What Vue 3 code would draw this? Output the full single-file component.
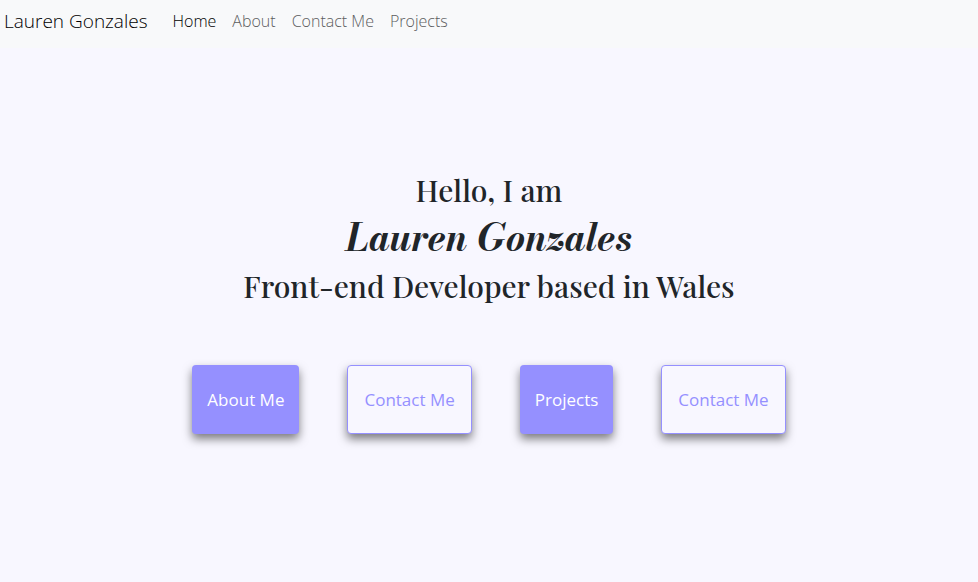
<script setup>
const links = [
  { label: 'Home', active: true },
  { label: 'About' },
  { label: 'Contact Me' },
  { label: 'Projects' },
]
const actions = [
  { label: 'About Me', kind: 'filled' },
  { label: 'Contact Me', kind: 'outline' },
  { label: 'Projects', kind: 'filled' },
  { label: 'Contact Me', kind: 'outline' },
]
</script>

<template>
  <div class="page">
    <nav class="navbar">
      <a class="brand" href="#">Lauren Gonzales</a>
      <ul class="links">
        <li v-for="link in links" :key="link.label">
          <a href="#" :class="{ active: link.active }">{{ link.label }}</a>
        </li>
      </ul>
    </nav>
    <main class="hero">
      <h2 class="line">Hello, I am</h2>
      <h1 class="name">Lauren Gonzales</h1>
      <h2 class="line">Front-end Developer based in Wales</h2>
      <div class="actions">
        <button v-for="(action, i) in actions" :key="i" type="button" :class="['btn', action.kind]">
          {{ action.label }}
        </button>
      </div>
    </main>
  </div>
</template>

<style>
body {
  margin: 0;
  background: #f8f7ff;
}
</style>

<style scoped>
.page {
  min-height: 100vh;
  background: #f8f7ff;
  color: #212529;
  font-family: "Segoe UI", "Open Sans", "Noto Sans", sans-serif;
}
.navbar {
  display: flex;
  align-items: center;
  gap: 17px;
  padding: 1px 4px 7px;
  background: #f8f9fa;
}
.brand {
  color: #000;
  font-size: 19px;
  font-weight: 300;
  line-height: 30px;
  text-decoration: none;
  white-space: nowrap;
}
.links {
  display: flex;
  margin: 0;
  padding: 0;
  list-style: none;
}
.links a {
  display: block;
  padding: 8px;
  color: #5c5d5e;
  font-size: 16px;
  font-weight: 300;
  line-height: 24px;
  text-decoration: none;
  white-space: nowrap;
}
.links a.active {
  color: #000;
}
.hero {
  display: flex;
  flex-direction: column;
  align-items: center;
  padding: 118px 16px 0;
  text-align: center;
}
.line {
  margin: 0;
  font-family: "Playfair Display", "Liberation Serif", serif;
  font-size: 30px;
  font-weight: 500;
  line-height: 48px;
}
.name {
  margin: 0;
  font-family: "Bodoni Moda", "Playfair Display", "Liberation Serif", serif;
  font-size: 37px;
  font-style: italic;
  font-weight: 700;
  line-height: 48px;
}
.actions {
  display: flex;
  flex-wrap: wrap;
  justify-content: center;
  gap: 48px;
  margin-top: 55px;
}
.btn {
  min-height: 69px;
  padding: 0 15px;
  border: 0;
  border-radius: 4px;
  box-shadow: 0 5px 10px rgba(0, 0, 0, 0.5);
  font-family: inherit;
  font-size: 17px;
  font-weight: 400;
  line-height: 27px;
}
.filled {
  background: #9590ff;
  color: #fff;
}
.outline {
  padding: 0 16px;
  border: 1px solid #9590ff;
  background: #f8f7ff;
  color: #9590ff;
}
</style>
